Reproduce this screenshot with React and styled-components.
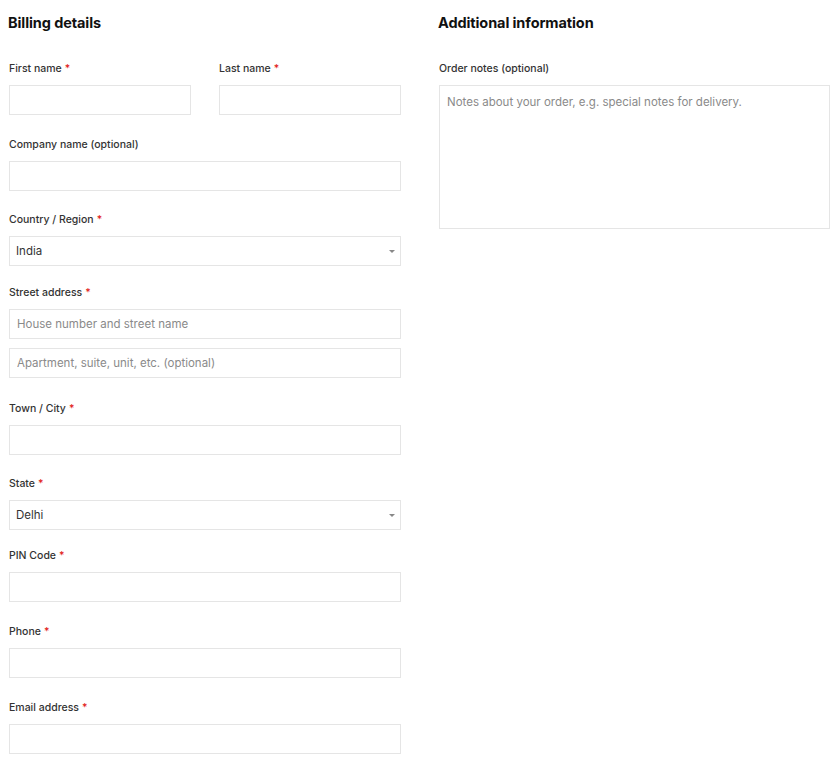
import React from 'react';
import styled, { createGlobalStyle } from 'styled-components';

const GlobalStyle = createGlobalStyle`
  body {
    margin: 0;
    background: #fff;
    font-family: Inter, "Noto Sans", Arial, sans-serif;
    color: #333;
  }
`;

const Page = styled.div`
  display: grid;
  grid-template-columns: 392px 391px;
  column-gap: 38px;
  padding: 13px 0 0 9px;
`;

const Column = styled.div`
  display: flex;
  flex-direction: column;
`;

const Heading = styled.h3`
  margin: 0 0 28px -1px;
  font-size: 14.5px;
  line-height: 20px;
  font-weight: 700;
  color: #111;
  letter-spacing: -0.1px;
`;

const Row = styled.div`
  display: grid;
  grid-template-columns: 182px 182px;
  column-gap: 28px;
`;

const Field = styled.div`
  display: flex;
  flex-direction: column;
  margin-bottom: ${(p) => p.$gap ?? 22}px;
`;

const Label = styled.label`
  display: block;
  font-size: 10.5px;
  line-height: 16px;
  font-weight: 500;
  color: #333;
  margin-bottom: 8px;
`;

const Required = styled.span`
  color: #e2231a;
  margin-left: 3px;
`;

const Input = styled.input`
  box-sizing: border-box;
  width: 100%;
  height: 30px;
  border: 1px solid #e5e5e5;
  border-radius: 0;
  padding: 0 7px;
  font-family: inherit;
  font-size: 11.5px;
  color: #333;
  background: #fff;
  outline: none;

  &::placeholder {
    color: #8a8a8a;
  }

  & + & {
    margin-top: 9px;
  }
`;

const SelectWrap = styled.div`
  position: relative;

  &::after {
    content: '';
    position: absolute;
    right: 6px;
    top: 14px;
    border-left: 3px solid transparent;
    border-right: 3px solid transparent;
    border-top: 3px solid #888;
  }
`;

const Select = styled.select`
  box-sizing: border-box;
  width: 100%;
  height: 30px;
  border: 1px solid #e5e5e5;
  border-radius: 0;
  padding: 0 6px;
  font-family: inherit;
  font-size: 11.5px;
  color: #333;
  background: #fff;
  appearance: none;
  outline: none;
`;

const TextArea = styled.textarea`
  box-sizing: border-box;
  width: 100%;
  height: 144px;
  border: 1px solid #e5e5e5;
  padding: 8px 7px;
  font-family: inherit;
  font-size: 11.5px;
  line-height: 16px;
  resize: none;
  outline: none;

  &::placeholder {
    color: #8a8a8a;
  }
`;

const Req = () => <Required>*</Required>;

const App = () => (
  <>
    <GlobalStyle />
    <Page>
      <Column>
        <Heading>Billing details</Heading>

        <Row>
          <Field>
            <Label>First name<Req /></Label>
            <Input type="text" />
          </Field>
          <Field>
            <Label>Last name<Req /></Label>
            <Input type="text" />
          </Field>
        </Row>

        <Field $gap={21}>
          <Label>Company name (optional)</Label>
          <Input type="text" />
        </Field>

        <Field $gap={19}>
          <Label>Country / Region<Req /></Label>
          <SelectWrap>
            <Select defaultValue="India">
              <option>India</option>
            </Select>
          </SelectWrap>
        </Field>

        <Field $gap={23}>
          <Label>Street address<Req /></Label>
          <Input type="text" placeholder="House number and street name" />
          <Input type="text" placeholder="Apartment, suite, unit, etc. (optional)" />
        </Field>

        <Field $gap={21}>
          <Label>Town / City<Req /></Label>
          <Input type="text" />
        </Field>

        <Field $gap={18}>
          <Label>State<Req /></Label>
          <SelectWrap>
            <Select defaultValue="Delhi">
              <option>Delhi</option>
            </Select>
          </SelectWrap>
        </Field>

        <Field>
          <Label>PIN Code<Req /></Label>
          <Input type="text" />
        </Field>

        <Field>
          <Label>Phone<Req /></Label>
          <Input type="tel" />
        </Field>

        <Field $gap={10}>
          <Label>Email address<Req /></Label>
          <Input type="email" />
        </Field>
      </Column>

      <Column>
        <Heading>Additional information</Heading>
        <Field>
          <Label>Order notes (optional)</Label>
          <TextArea placeholder="Notes about your order, e.g. special notes for delivery." />
        </Field>
      </Column>
    </Page>
  </>
);

export default App;
